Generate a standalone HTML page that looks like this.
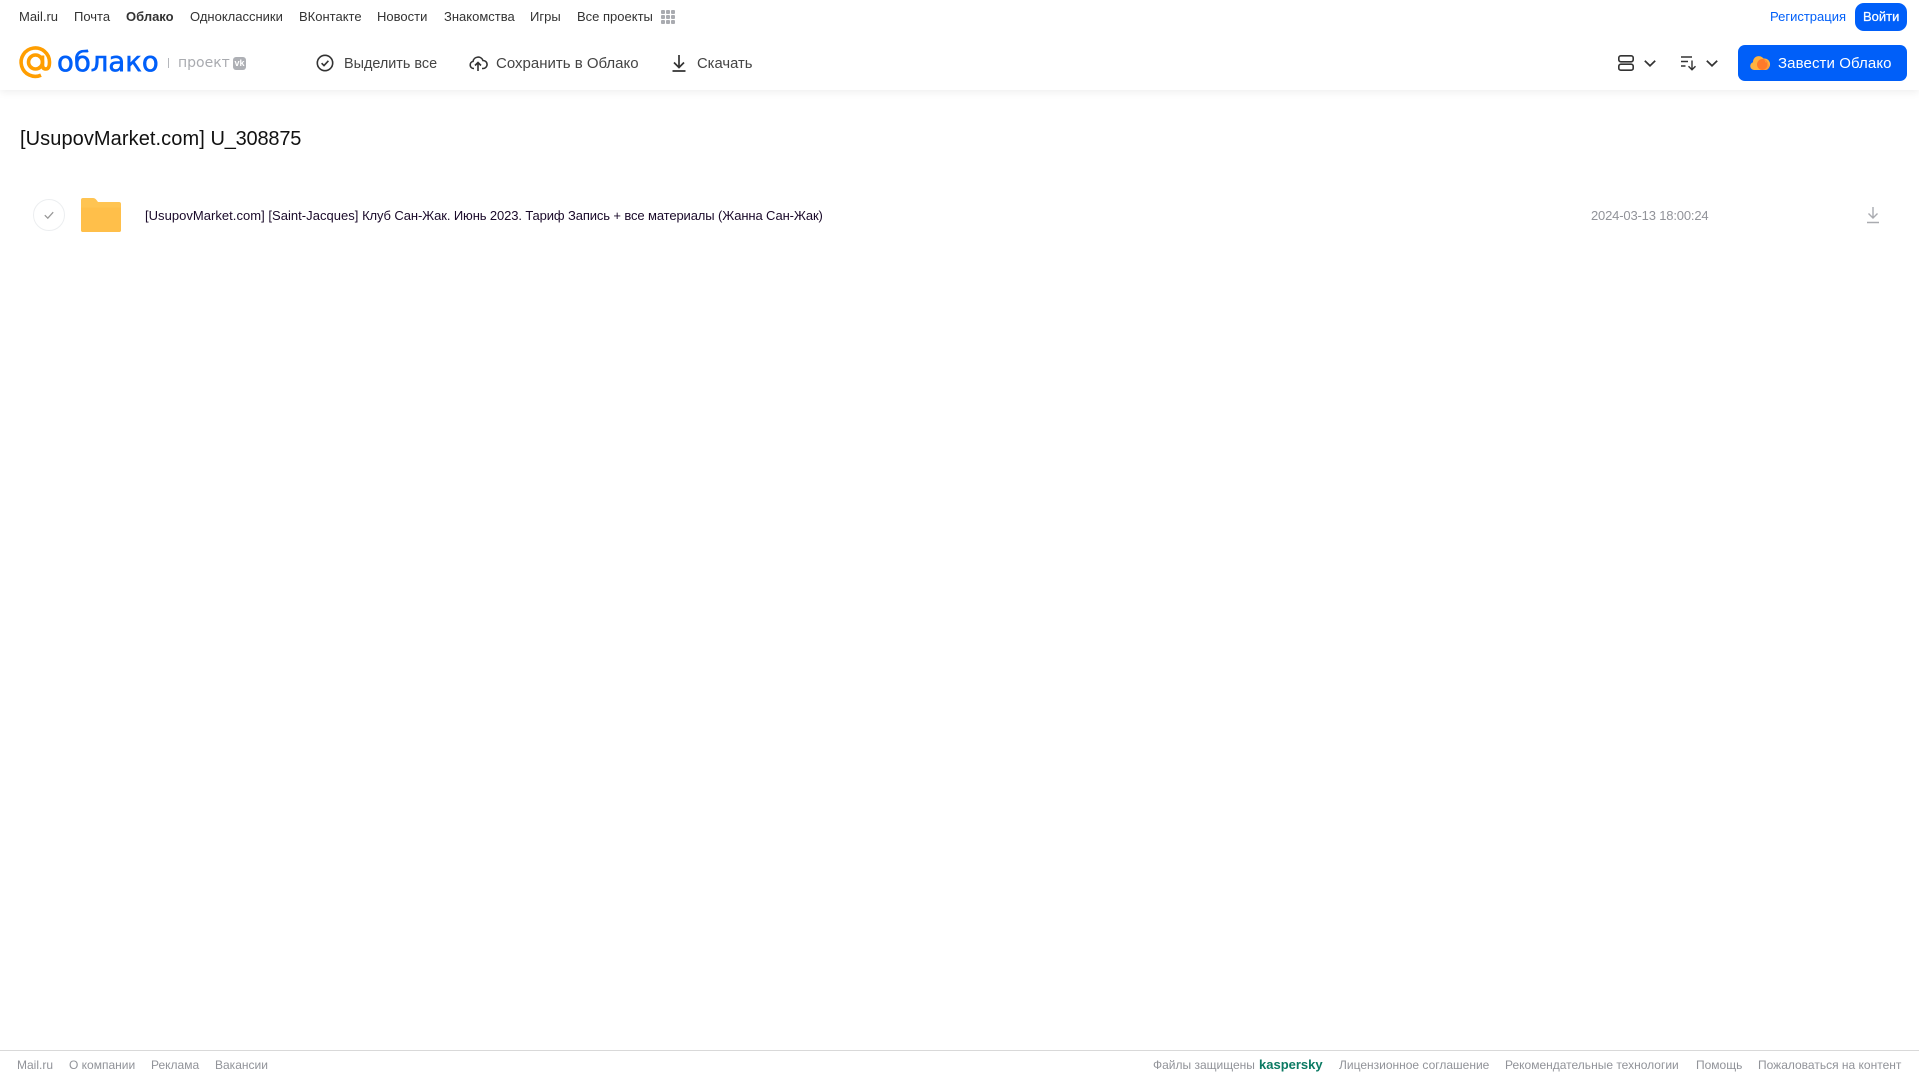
<!DOCTYPE html>
<html lang="ru"><head><meta charset="utf-8"><title>Облако</title>
<style>
html,body{margin:0;padding:0;background:#fff}
body{width:1919px;height:1079px;position:relative;overflow:hidden;font-family:"Liberation Sans",Arial,sans-serif}
.t{position:absolute;white-space:nowrap;line-height:20px;height:20px}
.n{top:7px;font-size:13px;color:#333}
.h{top:54px;font-size:15px;color:#444}
.f{top:1055px;font-size:12px;color:#919399}
svg{position:absolute;overflow:visible}
#hdr{position:absolute;left:0;top:0;width:1919px;height:90px;background:#fff;box-shadow:0 2px 8px rgba(0,0,0,.07)}
</style></head><body>
<div id="hdr"></div>
<span class="t n" style="left:19px">Mail.ru</span>
<span class="t n" style="left:74px">Почта</span>
<span class="t n" style="left:126px;font-weight:bold">Облако</span>
<span class="t n" style="left:190px">Одноклассники</span>
<span class="t n" style="left:299px">ВКонтакте</span>
<span class="t n" style="left:377px">Новости</span>
<span class="t n" style="left:444px">Знакомства</span>
<span class="t n" style="left:530px">Игры</span>
<span class="t n" style="left:577px">Все проекты</span>
<svg style="left:661px;top:10px" width="14" height="14" fill="#a9abb0"><rect width="4" height="4" rx="1"/><rect x="5" width="4" height="4" rx="1"/><rect x="10" width="4" height="4" rx="1"/><rect y="5" width="4" height="4" rx="1"/><rect x="5" y="5" width="4" height="4" rx="1"/><rect x="10" y="5" width="4" height="4" rx="1"/><rect y="10" width="4" height="4" rx="1"/><rect x="5" y="10" width="4" height="4" rx="1"/><rect x="10" y="10" width="4" height="4" rx="1"/></svg>

<span class="t n" style="left:1770px;color:#005ff9">Регистрация</span>
<div style="position:absolute;left:1855px;top:3px;width:52px;height:28px;border-radius:9px;background:#005ff9"></div>
<span class="t n" style="left:1863px;color:#fff;font-size:13px;-webkit-text-stroke:.25px #fff">Войти</span>

<svg style="left:19px;top:46px" width="33" height="33" viewBox="0 0 33 33" fill="none" stroke="#ff9e00" stroke-width="3.6"><circle cx="16.5" cy="16" r="7"/><path d="M23.5 9.5v9.5q0 4 3.4 4 3.600 0 3.600-7A14.200 14.200 0 1 0 22 29.200"/></svg>
<span class="t" style="left:57px;top:42px;height:40px;line-height:40px;font-family:'DejaVu Sans',sans-serif;font-size:27.5px;color:#005ff9;-webkit-text-stroke:.6px #005ff9">облако</span>
<div style="position:absolute;left:168px;top:58px;width:1px;height:10px;background:#b5b7bc"></div>
<span class="t" style="left:178px;top:53px;font-family:'DejaVu Sans',sans-serif;font-size:14px;color:#a9abb0">проект</span>
<div style="position:absolute;left:233px;top:57px;width:13px;height:13px;border-radius:3px;background:#aeb0b5;color:#fff;font-size:9px;font-weight:bold;line-height:13px;text-align:center">vk</div>

<svg style="left:316px;top:54px" width="18" height="18" fill="none" stroke="#333" stroke-width="1.6"><circle cx="9" cy="9" r="7.7"/><path d="M5.6 9.2l2.4 2.4 4.4-4.8"/></svg>
<span class="t h" style="left:344px;font-size:14.4px">Выделить все</span>
<svg style="left:469px;top:54px" width="18" height="18" fill="none" stroke="#333" stroke-width="1.6"><path d="M5 14.5H4.500a3.600 3.600 0 0 1-.5-7.100A5.200 5.200 0 0 1 14 6.500a4 4 0 0 1 .2 8H13"/><path d="M9 17V9M6 11.500L9 8.500l3 3"/></svg>
<span class="t h" style="left:496px">Сохранить в Облако</span>
<svg style="left:671px;top:54px" width="16" height="18" fill="none" stroke="#333" stroke-width="1.7"><path d="M8 1v12M3 8.500l5 5 5-5M1.500 17h13"/></svg>
<span class="t h" style="left:697px;font-size:14.8px">Скачать</span>

<svg style="left:1617px;top:54px" width="18" height="18" fill="none" stroke="#333" stroke-width="1.6"><rect x="1.8" y="1.8" width="14.4" height="6" rx="2"/><rect x="1.8" y="10.2" width="14.4" height="6" rx="2"/></svg>
<svg style="left:1644px;top:60px" width="12" height="7" fill="none" stroke="#333" stroke-width="1.7"><path d="M.8.8L6 5.800l5.200-5"/></svg>
<svg style="left:1680px;top:55px" width="17" height="16" fill="none" stroke="#333" stroke-width="1.4"><path d="M1 2h11M1 6.500h7M1 11h4.500M12 5.500v9M8.500 11.200l3.500 3.500 3.500-3.500"/></svg>
<svg style="left:1706px;top:60px" width="12" height="7" fill="none" stroke="#333" stroke-width="1.7"><path d="M.8.8L6 5.800l5.200-5"/></svg>

<div style="position:absolute;left:1738px;top:45px;width:169px;height:36px;border-radius:7px;background:#005ff9"></div>
<svg style="left:1750px;top:54px" width="20" height="17"><path d="M4 16a4 4 0 0 1-1-7.800A5.800 5.800 0 0 1 13.500 4.500 5.500 5.500 0 0 1 15 16z" fill="#ffb23f"/><circle cx="12.500" cy="10.500" r="5.500" fill="#ff7a2a"/><path d="M13 16h2.500a3.800 3.800 0 0 0 0-7.600A5.500 5.500 0 0 0 14 5.500 5.500 5.500 0 0 1 13 16z" fill="#ff9e3a"/></svg>
<span class="t h" style="left:1778px;color:#fff;letter-spacing:.1px">Завести Облако</span>

<span class="t" style="left:20px;top:125px;height:28px;line-height:28px;font-size:20px;color:#111"><span style="letter-spacing:.08px">[UsupovMarket.com] </span><span style="letter-spacing:-.2px">U_308875</span></span>

<svg style="left:33px;top:199px" width="32" height="32" fill="none"><circle cx="16" cy="16" r="15.500" stroke="#eceef0"/><path d="M11.800 16.200l3 3 5.400-6" stroke="#999" stroke-width="1.300"/></svg>
<svg style="left:81px;top:198px" width="40" height="34"><path d="M2 0h10q2 0 3.500 2L17 4H38a2 2 0 0 1 2 2v26a2 2 0 0 1-2 2H2a2 2 0 0 1-2-2V2a2 2 0 0 1 2-2z" fill="#ffc452"/><path d="M0 9.500h40V32a2 2 0 0 1-2 2H2a2 2 0 0 1-2-2z" fill="#ffbf4a"/></svg>
<span class="t" style="left:145px;top:206px;font-size:13px;color:#1a0a2a"><span style="letter-spacing:.03px">[UsupovMarket.com] [Saint-Jacques] </span><span style="letter-spacing:-.12px">Клуб Сан-Жак. Июнь 2023. Тариф Запись + все материалы (Жанна Сан-Жак)</span></span>
<span class="t" style="left:1591px;top:206px;font-size:13px;letter-spacing:-.17px;color:#919399">2024-03-13 18:00:24</span>
<svg style="left:1866px;top:206px" width="14" height="18" fill="none" stroke="#a9abb0" stroke-width="1.400"><path d="M7 1v11M2.500 7.500L7 12l4.500-4.500M1 16.500h12"/></svg>

<div style="position:absolute;left:0;top:1050px;width:1919px;height:1px;background:#d9d9d9"></div>
<span class="t f" style="left:17px">Mail.ru</span>
<span class="t f" style="left:69px">О компании</span>
<span class="t f" style="left:151px">Реклама</span>
<span class="t f" style="left:215px">Вакансии</span>
<span class="t f" style="left:1153px">Файлы защищены</span>
<span class="t f" style="left:1259px;color:#0b7a63;font-weight:bold;font-size:13px">kaspersky</span>
<span class="t f" style="left:1339px">Лицензионное соглашение</span>
<span class="t f" style="left:1505px">Рекомендательные технологии</span>
<span class="t f" style="left:1696px">Помощь</span>
<span class="t f" style="left:1758px">Пожаловаться на контент</span>
</body></html>
